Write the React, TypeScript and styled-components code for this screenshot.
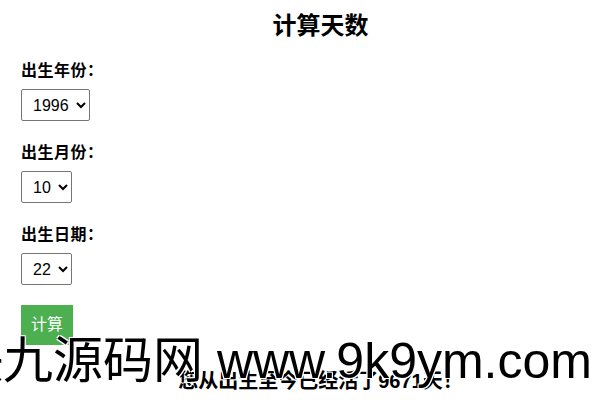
import React, { useState } from 'react';
import styled, { createGlobalStyle } from 'styled-components';

const GlobalStyle = createGlobalStyle`
  body {
    margin: 0;
    background: #fff;
    font-family: "Liberation Sans", "Noto Sans CJK SC", sans-serif;
    color: #000;
  }
`;

const years = Array.from({ length: 60 }, (_, i) => 1970 + i);
const months = Array.from({ length: 12 }, (_, i) => i + 1);
const days = Array.from({ length: 31 }, (_, i) => i + 1);

// days from the chosen birth date up to the fixed "today" of this page
const daysSince = (y: number, m: number, d: number) => {
  const today = Date.UTC(2023, 3, 5);
  const birth = Date.UTC(y, m - 1, d);
  return Math.floor((today - birth) / 86400000);
};

const App = () => {
  const [year, setYear] = useState(1996);
  const [month, setMonth] = useState(10);
  const [day, setDay] = useState(22);
  const [result, setResult] = useState(9671);

  return (
    <Page>
      <GlobalStyle />
      <Title>计算天数</Title>
      <Field>
        <Label>出生年份：</Label>
        <Select value={year} onChange={(e) => setYear(Number(e.target.value))}>
          {years.map((y) => (
            <option key={y} value={y}>
              {y}
            </option>
          ))}
        </Select>
      </Field>
      <Field>
        <Label>出生月份：</Label>
        <Select value={month} onChange={(e) => setMonth(Number(e.target.value))}>
          {months.map((m) => (
            <option key={m} value={m}>
              {m}
            </option>
          ))}
        </Select>
      </Field>
      <Field>
        <Label>出生日期：</Label>
        <Select value={day} onChange={(e) => setDay(Number(e.target.value))}>
          {days.map((d) => (
            <option key={d} value={d}>
              {d}
            </option>
          ))}
        </Select>
      </Field>
      <Button onClick={() => setResult(daysSince(year, month, day))}>计算</Button>
      <Result>您从出生至今已经活了{result}天！</Result>
      <Watermark>快九源码网 www.9k9ym.com</Watermark>
    </Page>
  );
};

const Page = styled.div`
  position: relative;
  height: 400px;
  overflow: hidden;
  padding: 0 0 0 21px;
  box-sizing: border-box;
`;

const Title = styled.h2`
  margin: 0;
  padding: 11px 0 0 8px;
  height: 30px;
  line-height: 30px;
  font-size: 24px;
  font-weight: bold;
  text-align: center;
`;

const Field = styled.div`
  display: flex;
  flex-direction: column;
  align-items: flex-start;
  margin-top: 20px;
  & + & {
    margin-top: 22px;
  }
`;

const Label = styled.label`
  font-size: 16px;
  font-weight: bold;
  line-height: 20px;
  margin-bottom: 8px;
  letter-spacing: 0.5px;
`;

const Select = styled.select`
  height: 32px;
  font-size: 16px;
  font-family: "Liberation Sans", Arial, sans-serif;
  padding: 0 4px 0 7px;
  border: 1px solid #767676;
  border-radius: 2px;
  background: #fff;
  color: #000;
`;

const Button = styled.button`
  display: block;
  margin-top: 20px;
  padding: 10px;
  border: none;
  background: #4caf50;
  color: #fff;
  font-size: 16px;
  line-height: 20px;
  font-family: "Liberation Sans", "Noto Sans CJK SC", sans-serif;
  cursor: pointer;
`;

const Result = styled.h3`
  margin: 24px 0 0;
  padding-left: 8px;
  font-size: 20px;
  line-height: 24px;
  font-weight: bold;
  text-align: center;
`;

const Watermark = styled.div`
  position: absolute;
  left: -47px;
  top: 333px;
  font-size: 50px;
  line-height: 56px;
  white-space: nowrap;
  color: #000;
  pointer-events: none;
  text-shadow: 1px 1px 0 #fff, -1px -1px 0 #fff, 1px -1px 0 #fff, -1px 1px 0 #fff;
`;

export default App;
